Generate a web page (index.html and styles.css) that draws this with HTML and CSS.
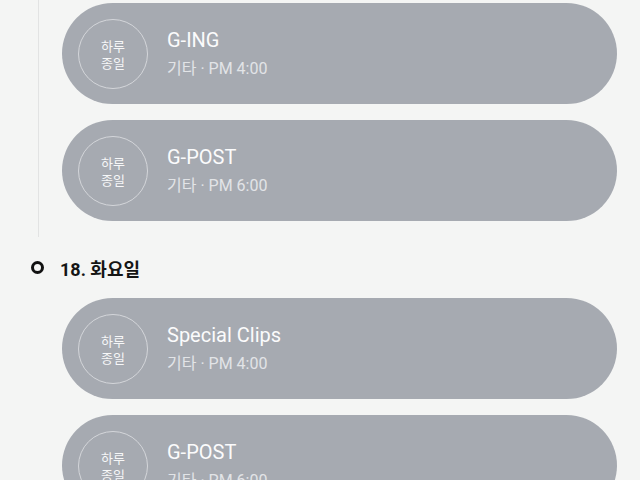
FILE: index.html
```html
<!DOCTYPE html>
<html lang="ko">
<head>
<meta charset="utf-8">
<link rel="stylesheet" href="styles.css">
</head>
<body>
<div class="timeline">
  <section class="group group-first">
    <div class="cards">
      <div class="card">
        <div class="allday">하루<br>종일</div>
        <div class="info">
          <div class="title">G-ING</div>
          <div class="meta">기타 · PM 4:00</div>
        </div>
      </div>
      <div class="card">
        <div class="allday">하루<br>종일</div>
        <div class="info">
          <div class="title">G-POST</div>
          <div class="meta">기타 · PM 6:00</div>
        </div>
      </div>
    </div>
  </section>
  <section class="group">
    <h2 class="day"><span class="bullet"></span>18. 화요일</h2>
    <div class="cards cards-plain">
      <div class="card">
        <div class="allday">하루<br>종일</div>
        <div class="info">
          <div class="title">Special Clips</div>
          <div class="meta">기타 · PM 4:00</div>
        </div>
      </div>
      <div class="card">
        <div class="allday">하루<br>종일</div>
        <div class="info">
          <div class="title">G-POST</div>
          <div class="meta">기타 · PM 6:00</div>
        </div>
      </div>
    </div>
  </section>
</div>
</body>
</html>
```
FILE: styles.css
```css
html, body {
  margin: 0;
  padding: 0;
  background: #f4f5f4;
  font-family: Roboto, "Noto Sans CJK KR", sans-serif;
  overflow: hidden;
}

.timeline {
  width: 640px;
}

.cards {
  margin-left: 38px;
  border-left: 1px solid #e2e3e3;
  padding: 3px 23px 16px 23px;
  display: flex;
  flex-direction: column;
  gap: 16px;
}

.cards-plain {
  border-left-color: transparent;
  padding-top: 0;
}

.card {
  height: 101px;
  background: #a6aab1;
  border-radius: 51px;
  display: flex;
  align-items: center;
  padding-left: 16px;
  gap: 19px;
}

.allday {
  width: 70px;
  height: 70px;
  box-sizing: border-box;
  border: 1px solid #d4d6da;
  border-radius: 50%;
  display: flex;
  align-items: center;
  justify-content: center;
  text-align: center;
  color: #f6f7f8;
  font-family: "Noto Sans CJK KR", sans-serif;
  font-size: 13px;
  line-height: 17px;
}

.info {
  display: flex;
  flex-direction: column;
}

.title {
  color: #fbfbfc;
  font-size: 20px;
  line-height: 24px;
}

.meta {
  color: #e2e4e7;
  font-size: 16px;
  line-height: 22px;
  margin-top: 6px;
}

.day {
  margin: 0;
  height: 61px;
  display: flex;
  align-items: center;
  font-family: Roboto, "Noto Sans CJK KR", sans-serif;
  font-size: 18px;
  font-weight: 700;
  color: #151515;
  padding-left: 31px;
}

.bullet {
  width: 13px;
  height: 13px;
  box-sizing: border-box;
  border: 3px solid #111;
  border-radius: 50%;
  margin-right: 16px;
}
```
